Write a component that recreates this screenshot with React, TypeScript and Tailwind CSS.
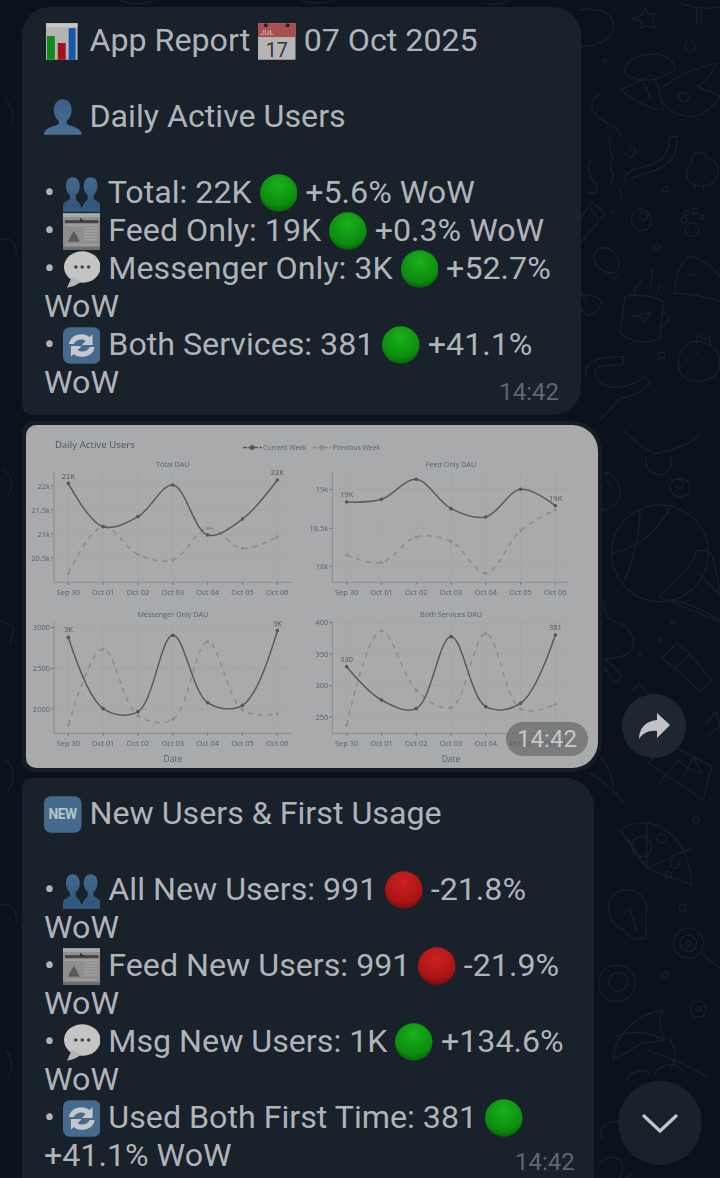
import React from "react";

const Emoji = ({ children, box = "0 0 38 38" }: { children: React.ReactNode; box?: string }) => (
  <svg viewBox={box} className="inline-block w-[37.5px] h-[38px] align-[-9px]">
    {children}
  </svg>
);

const ChartE = () => (
  <Emoji>
    <rect x="2" y="1" width="32" height="37" fill="#b4b4b4" />
    <rect x="2" y="1" width="32" height="4" fill="#c6c6c6" />
    <rect x="3" y="14" width="8" height="24" fill="#0f8a1c" />
    <rect x="14" y="21" width="8" height="17" fill="#a5101a" />
    <rect x="25" y="6" width="7" height="32" fill="#1556a8" />
  </Emoji>
);
const CalE = () => (
  <Emoji>
    <rect x="0" y="1" width="38" height="37" fill="#b5b5b5" />
    <rect x="0" y="1" width="38" height="14" fill="#a85050" />
    <circle cx="8" cy="3" r="2" fill="#222" />
    <circle cx="30" cy="3" r="2" fill="#222" />
    <text x="2" y="13" fontSize="8" fill="#d8c0c0" fontFamily="Roboto, sans-serif">JUL</text>
    <text x="19" y="35" fontSize="20" textAnchor="middle" fill="#333" fontFamily="Roboto, sans-serif">17</text>
  </Emoji>
);
const bustPath = "M19 1c-6 0-9 5-9 11 0 5 2 9 5 11v3c-3 2-13 3-15 9v2h38v-2c-2-6-12-7-15-9v-3c3-2 5-6 5-11 0-6-3-11-9-11z";
const BustE = () => (
  <Emoji>
    <defs>
      <linearGradient id="bg1" x1="0" y1="0" x2="0" y2="1">
        <stop offset="0" stopColor="#3a5f84" />
        <stop offset="1" stopColor="#4a7096" />
      </linearGradient>
    </defs>
    <path d={bustPath} fill="url(#bg1)" />
  </Emoji>
);
const BustsE = () => (
  <Emoji>
    <defs>
      <linearGradient id="bg2" x1="0" y1="0" x2="0" y2="1">
        <stop offset="0" stopColor="#44698e" />
        <stop offset="1" stopColor="#2f5378" />
      </linearGradient>
    </defs>
    <path d="M10 3c-5 0-7 4-7 9 0 4 2 8 4 9v4c-2 2-7 3-7 7v6h18v-6c-1-3-4-5-5-7v-4c3-2 4-5 4-9 0-5-3-9-7-9z" fill="url(#bg2)" />
    <path d="M28 3c-5 0-7 4-7 9 0 4 1 7 4 9v4c-1 2-4 4-5 7v6h18v-6c0-4-5-5-7-7v-4c2-1 4-5 4-9 0-5-2-9-7-9z" fill="url(#bg2)" />
    <rect x="0" y="33" width="38" height="5" fill="#33597f" />
  </Emoji>
);
const NewsE = () => (
  <Emoji>
    <rect x="0" y="1" width="38" height="37" fill="#8e8e8e" />
    <rect x="0" y="1" width="38" height="4" fill="#a8a8a8" />
    <rect x="2" y="8" width="34" height="3" fill="#444" />
    <path d="M2 13h34" stroke="#b0b0b0" strokeWidth="1" />
    <path d="M17 5l4 4-3 0z" fill="#222" />
    <path d="M5 30l4-8 2-3 2 3 4 8z" fill="#5a5a5a" />
    <path d="M21 16h14M21 19h14M21 22h14M21 25h14M21 28h14M3 33h32" stroke="#aaa" strokeWidth="1" />
    <rect x="0" y="35" width="38" height="3" fill="#6e6e6e" />
  </Emoji>
);
const SpeechE = () => (
  <Emoji>
    <ellipse cx="19.500" cy="17" rx="18.500" ry="16" fill="#c4c4c4" />
    <path d="M9 27L4 38c6-1 11-3 14-6z" fill="#b4b4b4" />
    <circle cx="13" cy="17" r="1.800" fill="#444" />
    <circle cx="19.500" cy="17" r="1.800" fill="#444" />
    <circle cx="26" cy="17" r="1.800" fill="#444" />
  </Emoji>
);
const RefreshE = () => (
  <Emoji>
    <rect x="0" y="1" width="38" height="37" rx="7" fill="#466a8b" />
    <path d="M6 18c1-7 7-10 13-10 3 0 6 1 8 3l3-3v11H19l4-4c-3-3-10-2-12 3z" fill="#c4c8cc" />
    <path d="M32 21c-1 7-7 10-13 10-3 0-6-1-8-3l-3 3V20h11l-4 4c3 3 10 2 12-3z" fill="#c4c8cc" />
  </Emoji>
);
const NewE = () => (
  <Emoji>
    <rect x="0" y="1" width="38" height="37" rx="7" fill="#456a8c" />
    <text x="19" y="24.500" fontSize="14" fontWeight="700" textAnchor="middle" fill="#b8c2cc" fontFamily="Roboto, sans-serif" textLength="29">NEW</text>
  </Emoji>
);
const Dot = ({ c }: { c: "g" | "r" }) => {
  const id = c === "g" ? "dg" : "dr";
  return (
    <Emoji>
      <defs>
        <radialGradient id={id} cx="0.5" cy="0.3" r="0.72">
          <stop offset="0" stopColor={c === "g" ? "#1cb01c" : "#cc2222"} />
          <stop offset="0.75" stopColor={c === "g" ? "#0b8c0e" : "#a81414"} />
          <stop offset="1" stopColor={c === "g" ? "#065c08" : "#6e0c0c"} />
        </radialGradient>
      </defs>
      <circle cx="19" cy="19" r="19" fill={`url(#${id})`} />
    </Emoji>
  );
};

const Line = ({ children }: { children?: React.ReactNode }) => (
  <div className="h-[38px] leading-[38px] whitespace-pre">{children}</div>
);

const days = ["Sep 30", "Oct 01", "Oct 02", "Oct 03", "Oct 04", "Oct 05", "Oct 06"];

type Pt = [number, number];

// the centripetal spline that the plotting library behind the picture draws
function controls(p0: Pt, p1: Pt, p2: Pt, s: number): [Pt, Pt] {
  const d1x = p0[0] - p1[0], d1y = p0[1] - p1[1], d2x = p2[0] - p1[0], d2y = p2[1] - p1[1];
  const d1a = Math.pow(d1x * d1x + d1y * d1y, 0.25);
  const d2a = Math.pow(d2x * d2x + d2y * d2y, 0.25);
  const numx = (d2a * d2a * d1x - d1a * d1a * d2x) * s;
  const numy = (d2a * d2a * d1y - d1a * d1a * d2y) * s;
  const den1 = 3 * d2a * (d1a + d2a);
  const den2 = 3 * d1a * (d1a + d2a);
  return [
    [p1[0] + numx / den1, p1[1] + numy / den1],
    [p1[0] - numx / den2, p1[1] - numy / den2],
  ];
}

function spline(p: Pt[]) {
  const c: [Pt, Pt][] = [];
  for (let i = 1; i < p.length - 1; i++) c.push(controls(p[i - 1], p[i], p[i + 1], 1));
  let d = `M${p[0][0]} ${p[0][1]}Q${c[0][0][0]} ${c[0][0][1]} ${p[1][0]} ${p[1][1]}`;
  for (let i = 1; i < p.length - 2; i++) {
    d += `C${c[i - 1][1][0]} ${c[i - 1][1][1]} ${c[i][0][0]} ${c[i][0][1]} ${p[i + 1][0]} ${p[i + 1][1]}`;
  }
  const last = c[c.length - 1][1];
  const end = p[p.length - 1];
  return `${d}Q${last[0]} ${last[1]} ${end[0]} ${end[1]}`;
}

type ChartProps = {
  ox: number; oy: number; x0: number; x1: number; axL: number; axR: number; top: number; bot: number;
  cur: number[]; prev: number[]; ticks: [string, number][]; title: string; date?: boolean;
  labels: [string, number, number][];
};

// every coordinate below is a 3x zoom measure, relative to the chart's own origin
function Chart({ ox, oy, x0, x1, axL, axR, top, bot, cur, prev, ticks, title, date, labels }: ChartProps) {
  const X = (v: number) => ox + v / 3;
  const Y = (v: number) => oy + v / 3;
  const xs = days.map((_, i) => x0 + ((x1 - x0) * i) / 6);
  const cp = cur.map((v, i) => [X(xs[i]), Y(v)] as Pt);
  const pp = prev.map((v, i) => [X(xs[i]), Y(v)] as Pt);
  return (
    <g fontFamily="'Open Sans', sans-serif">
      <text x={X((x0 + x1) / 2)} y={Y(top - 15)} fontSize="7.200" textAnchor="middle" fill="#565f6e">{title}</text>
      {xs.map((x) => (
        <path key={x} d={`M${X(x)} ${Y(top)}V${Y(bot)}`} stroke="#a1a2a4" strokeWidth="0.6" />
      ))}
      {ticks.map(([t, y]) => (
        <g key={t}>
          <path d={`M${X(axL)} ${Y(y)}H${X(axR)}`} stroke="#a1a2a4" strokeWidth="0.6" />
          <path d={`M${X(axL) - 3} ${Y(y)}H${X(axL)}`} stroke="#666" strokeWidth="0.8" />
          <text x={X(axL) - 4} y={Y(y) + 2.500} fontSize="7.500" textAnchor="end" fill="#565f6e">{t}</text>
        </g>
      ))}
      <path d={`M${X(axL)} ${Y(top)}V${Y(bot)}H${X(axR)}`} fill="none" stroke="#828488" strokeWidth="0.8" />
      {xs.map((x, i) => (
        <g key={i}>
          <path d={`M${X(x)} ${Y(bot)}v2.500`} stroke="#666" strokeWidth="0.8" />
          <text x={X(x)} y={Y(bot) + 12.500} fontSize="7.500" textAnchor="middle" fill="#565f6e">{days[i]}</text>
        </g>
      ))}
      <path d={spline(pp)} fill="none" stroke="#8b8c8e" strokeWidth="1.500" strokeDasharray="5 5" />
      {pp.map((p, i) => <circle key={i} cx={p[0]} cy={p[1]} r="1.500" fill="#8b8c8e" />)}
      <path d={spline(cp)} fill="none" stroke="#5a5b5d" strokeWidth="1.500" />
      {cp.map((p, i) => <circle key={i} cx={p[0]} cy={p[1]} r="1.800" fill="#555" />)}
      {labels.map(([t, x, y]) => (
        <text key={t + x} x={X(x)} y={Y(y)} fontSize="7.500" textAnchor="middle" fill="#555">{t}</text>
      ))}
      {date && <text x={X((x0 + x1) / 2)} y={Y(bot) + 28.500} fontSize="8.500" textAnchor="middle" fill="#565f6e">Date</text>}
    </g>
  );
}

const ReportImage = () => (
  <svg viewBox="26 425 572 343" className="block w-[572px] h-[343px] rounded-tl-[10px] rounded-bl-[10px] rounded-r-[26px] blur-[0.4px]">
    <rect x="26" y="425" width="572" height="343" fill="#a9aaab" />
    <g fontFamily="'Open Sans', sans-serif">
      <text x="55" y="447.500" fontSize="9.700" fill="#4e5461">Daily Active Users</text>
      <path d="M243 447.500h19" stroke="#555" strokeWidth="1.500" strokeDasharray="4 1.500" />
      <circle cx="252" cy="447.500" r="2.500" fill="#555" />
      <text x="263" y="450" fontSize="6.800" fill="#565f6e">Current Week</text>
      <path d="M313 447.500h19" stroke="#8b8c8e" strokeWidth="1.500" strokeDasharray="4 1.500" />
      <circle cx="322" cy="447.500" r="2.500" fill="#8b8c8e" />
      <text x="333" y="450" fontSize="6.900" fill="#565f6e">Previous Week</text>
    </g>
    <Chart ox={30} oy={425} x0={115} x1={742} axL={72} axR={785} top={140} bot={472} title="Total DAU"
      cur={[175, 305, 275, 180, 330, 282, 165]} prev={[445, 305, 388, 405, 310, 370, 335]}
      ticks={[["22k", 183], ["21.5k", 255], ["21k", 327], ["20.5k", 399]]}
      labels={[["22K", 115, 162], ["22K", 742, 151]]} />
    <Chart ox={300} oy={425} x0={140} x1={766} axL={97} axR={805} top={140} bot={472} title="Feed Only DAU"
      cur={[231, 223, 163, 251, 276, 193, 242]} prev={[390, 412, 336, 349, 445, 317, 255]}
      ticks={[["19k", 193], ["18.5k", 310], ["18k", 424]]}
      labels={[["19K", 140, 216], ["19K", 767, 228]]} />
    <Chart ox={30} oy={600} x0={115} x1={742} axL={72} axR={785} top={67} bot={400} title="Messenger Only DAU" date
      cur={[112, 326, 335, 106, 308, 316, 92]} prev={[375, 147, 347, 358, 125, 330, 342]}
      ticks={[["3000", 83], ["2500", 205], ["2000", 327]]}
      labels={[["3K", 115, 96], ["3K", 742, 78]]} />
    <Chart ox={300} oy={600} x0={140} x1={766} axL={97} axR={805} top={67} bot={400} title="Both Services DAU" date
      cur={[200, 300, 326, 110, 320, 310, 105]} prev={[375, 92, 270, 323, 100, 327, 313]}
      ticks={[["400", 68], ["350", 162], ["300", 257], ["250", 351]]}
      labels={[["330", 140, 187], ["381", 766, 91]]} />
  </svg>
);

const Doodles = () => (
  <svg viewBox="0 0 720 1178" className="absolute inset-0 w-[720px] h-[1178px]" fill="none" stroke="#18202b" strokeWidth="4" strokeLinecap="round" strokeLinejoin="round">
    <g transform="translate(580 0) scale(0.3333)">
      <path d="M0 30c60-10 100 10 100 50s-50 60-100 60M195 25l10 18 22-2-10 22 8 22-24-8-18 8 2-20-28-10 26-8z" />
      <path d="M300 10c30 10 80 20 120 10M350 25v45M365 25v45" />
      <circle cx="330" cy="140" r="16" /><circle cx="75" cy="182" r="6" />
      <path d="M135 215c-5-40 60-60 110-50 30 10 40 30 40 45l-50 25c-40 10-90 5-100-20z" />
      <path d="M120 270c30-10 60-30 90-45 30 20 30 70 40 105-50-5-90-30-130-60zM190 250c10 10 15 30 20 45" />
      <path d="M250 260c40-30 100-60 160-70-10 30-40 60-60 70 30 10 60 20 70 30-20 30-50 60-90 60-40-5-70-20-85-50M295 290c0-15 25-15 30 0 0 20-15 25-30 0z" />
      <path d="M60 285c-35 10-30 50 0 70 30 20 60 30 60 55M85 410c15 15-5 30 10 50s-15 35 0 50-5 30 0 40" />
      <path d="M135 535c5-30 60-30 90-45s40-40 45-80h20c5 50-20 80-50 95s-65 15-90 35c-10 5-15 5-15-5z" />
      <path d="M150 440c15 0 20 15 12 25s-25 5-25-8M35 480c-20 20-5 50 10 70s0 40-20 25M255 560a8 8 0 1 0 .1 0" />
      <path d="M335 490c-10-30 35-45 45-15 30 0 40 30 30 60-20 30-70 30-85 5-10-20-5-40 10-50zM345 570v-15M370 570v-15" />
      <path d="M0 660l35-55 40 35-75 90M30 625l25 30M120 570l5 30M95 640l10-10" />
      <path d="M185 635c30 0 35 35 20 50s-50 5-50-25 25-40 40-30c15 10 10 30-5 30s-15-15-5-20" />
      <path d="M320 680c10-15 25-20 35 5 5 15-5 25-25 25-15-5-20-20-10-30z" />
      <circle cx="312" cy="660" r="9" /><circle cx="318" cy="638" r="7" /><circle cx="345" cy="634" r="9" /><circle cx="365" cy="652" r="7" />
      <circle cx="230" cy="742" r="9" />
      <path d="M60 745c-30 15-20 55 15 70 10 5 30 10 40-10 10-30-20-70-55-60zM90 820c-5 15 20 25 25 0" />
      <path d="M285 880c0-50 15-105 50-110 40 10 70 40 85 60M280 880c50 0 100 10 140 25M320 820l15 10 15-10" />
      <path d="M120 1000l15-110c40-10 90 0 115 15l-10 110c-40 20-90 10-120-15zM245 940c30-10 30 30-10 45M155 950l60-15-20 30-15-15-25 0M165 880c-10-20 25-30 15-40M210 870c-5-30 15-35 5-60M230 885c10-15 0-25 10-35" />
      <path d="M295 1090c0-50 40-80 80-60 40 10 50 40 40 80-10 30-60 40-90 30-20-10-30-30-30-50zM350 1030c0-10 0-20 5-25l15 15 20-10 0 20M320 1080l3 3M350 1060l3 3M380 1100l3 3M340 1110l3 3" />
      <circle cx="245" cy="1066" r="10" />
      <path d="M20 1130c-15-40 30-60 110-60v25c-50 0-90 0-85 25 5 30 40 50 80 40 30-5 50-15 70-30l15 20c-30 30-50 40-90 45-30 40-50 50-60 65" />
      <path d="M20 900c-10-10-30-30-20 0M0 880c20 10 50 0 65 25-10 30-30 45-45 40l-20-20" />
    </g>
    <g transform="translate(590 420) scale(0.3333)">
      <path d="M40 160c30-10 50 30 50 60 0 30-30 50-60 50M50 180l20 25" />
      <path d="M265 175c35 0 40 30 30 45s-50 15-55-15 30-35 40-15c5 15-15 20-20 10" />
      <path d="M100 30c30 30 60 60 100 70 40-10 100-20 130-60M170 110c-10 30 5 50 40 55 30-10 40-30 30-55" />
      <circle cx="210" cy="400" r="145" />
      <path d="M65 400c80-15 130-60 175-135M150 270c0 80-20 150-50 220" />
      <path d="M205 530c10-20 30-15 45-40 0-20 30-20 40-40 5-20 30-30 25-55 30-10 40 0 50 10 10 30 20 80 25 120l-70-70M205 530l185 75M230 540c50 0 110 30 160 60" />
      <circle cx="250" cy="605" r="6" /><circle cx="212" cy="660" r="4" /><circle cx="148" cy="705" r="4" />
      <path d="M215 715l45-45 40 30-45 45zM255 745l75 70 35-35-65-75" />
      <path d="M45 545c-5 30 0 50 30 60 50 10 65 60 50 85-15 20-50 25-80 25l50 50-20 25-35-50" />
      <path d="M130 810l20-20 15 25 15 10-20 10" />
      <path d="M175 1030l60-60 130 70-25 100zM210 1085l55-65 30 25 30 15M280 1070l30-60 25 50" />
      <path d="M345 915l35-40 10 45-35 25" />
      <path d="M0 1060c40 20 70 50 100 85M30 1010c20 20 40 60 40 90" />
    </g>
    <g transform="translate(590 780) scale(0.3333)">
      <path d="M90 150c90-60 210 10 215 165l-135-50zM110 170l60 95 130-60M170 135v130" />
      <circle cx="155" cy="200" r="30" /><circle cx="215" cy="175" r="14" /><circle cx="255" cy="250" r="14" /><circle cx="235" cy="285" r="10" />
      <circle cx="318" cy="120" r="9" /><circle cx="278" cy="383" r="10" /><circle cx="225" cy="585" r="10" />
      <path d="M100 450c-40-15-60-70-30-105 30-30 90-15 100 30-5 40-5 60 0 100l-35 5zM100 400l20-15 20 70M135 480l35-15" />
      <circle cx="295" cy="490" r="45" /><circle cx="295" cy="490" r="25" /><circle cx="295" cy="490" r="8" />
      <path d="M335 520l55 45" />
      <circle cx="80" cy="610" r="55" /><circle cx="85" cy="605" r="28" />
      <circle cx="325" cy="688" r="24" /><circle cx="325" cy="688" r="8" />
      <path d="M70 840c0-70 70-140 150-150-20 30-5 70 5 90l-70 10-85 50zM75 770c50-20 100-15 150 10M170 810c60 20 130 50 180 80M110 900c10-25 60-40 70-15" />
    </g>
    <g transform="translate(590 1040) scale(0.3333)">
      <path d="M170 290c-10-30 20-60 70-60M195 100c30-40 80-30 85 0M240 0c20 20 20 60 0 90" />
      <path d="M40 300c-25-30 15-70 60-50 25 15 15 40-5 50M20 390c5-30 40-50 70-30 20 30 0 60-20 70M100 420l30-20" />
    </g>
    <path d="M6 100c6 6 10 16 4 26M0 240c10-4 18 4 16 14M4 470c8 6 10 16 4 26M0 620l14 8-4 16M6 760c8 8 10 20 2 30M0 905c10-2 18 6 16 18M6 1050c6 8 8 18 2 28" strokeWidth="1.300" />
    <path d="M120 0c10 5 24 5 34 0M300 0c12 4 24 4 36 0M480 2c8 3 20 3 30-2" strokeWidth="1.300" />
  </svg>
);

export default function App() {
  return (
    <div className="relative w-[720px] h-[1178px] overflow-hidden bg-[#0c121c] font-['Roboto',sans-serif] text-[32.2px] text-[#b0b4b9]">
      <Doodles />
      <div className="relative flex flex-col items-start gap-[6px] pl-[22px] pt-[7px]">
        <div className="relative w-[559px] bg-[#19212b] rounded-t-[28px] rounded-br-[28px] rounded-bl-[10px] pl-[22px] pt-[14px] pb-[14px]">
          <Line><ChartE /> App Report <CalE /> 07 Oct 2025</Line>
          <Line />
          <Line><BustE /> Daily Active Users</Line>
          <Line />
          <Line>• <BustsE /> Total: 22K <Dot c="g" /> +5.6% WoW</Line>
          <Line>• <NewsE /> Feed Only: 19K <Dot c="g" /> +0.3% WoW</Line>
          <Line>• <SpeechE /> Messenger Only: 3K <Dot c="g" /> +52.7%</Line>
          <Line>WoW</Line>
          <Line>• <RefreshE /> Both Services: 381 <Dot c="g" /> +41.1%</Line>
          <Line>WoW</Line>
          <span className="absolute right-[22px] bottom-[9px] text-[24px] leading-[28px] text-[#5f6770]">14:42</span>
        </div>

        <div className="flex items-end gap-[20px]">
          <div className="relative bg-[#141c26] rounded-l-[10px] rounded-r-[30px] p-[4px]">
            <ReportImage />
            <span className="absolute right-[14px] bottom-[16px] h-[34px] w-[82px] rounded-[17px] bg-[#5c5d5e]/60 text-center text-[24px] leading-[34px] text-[#c6c7c8]">14:42</span>
          </div>
          <button className="mb-[14px] flex h-[64px] w-[64px] items-center justify-center rounded-full bg-[#1e2731]">
            <svg viewBox="0 0 32 28" className="h-[28px] w-[32px]">
              <path d="M19 1l13 12-13 13v-7C11 18 5 21 1 27c0-10 6-18 18-19z" fill="#c0c2c5" />
            </svg>
          </button>
        </div>

        <div className="relative w-[572px] h-[420px] bg-[#19212b] rounded-tr-[28px] rounded-tl-[10px] pl-[22px] pt-[16px]">
          <Line><NewE /> New Users &amp; First Usage</Line>
          <Line />
          <Line>• <BustsE /> All New Users: 991 <Dot c="r" /> -21.8%</Line>
          <Line>WoW</Line>
          <Line>• <NewsE /> Feed New Users: 991 <Dot c="r" /> -21.9%</Line>
          <Line>WoW</Line>
          <Line>• <SpeechE /> Msg New Users: 1K <Dot c="g" /> +134.6%</Line>
          <Line>WoW</Line>
          <Line>• <RefreshE /> Used Both First Time: 381 <Dot c="g" /></Line>
          <Line>+41.1% WoW</Line>
          <span className="absolute left-[493px] top-[370px] text-[24px] leading-[28px] text-[#5f6770]">14:42</span>
        </div>
      </div>

      <button className="absolute right-[18px] bottom-[13px] flex h-[84px] w-[84px] items-center justify-center rounded-full bg-[#19212b]">
        <svg viewBox="0 0 36 20" className="h-[20px] w-[36px]" fill="none" stroke="#c3c6c9" strokeWidth="3.200" strokeLinecap="round" strokeLinejoin="round">
          <path d="M2 3l16 15L34 3" />
        </svg>
      </button>
    </div>
  );
}
